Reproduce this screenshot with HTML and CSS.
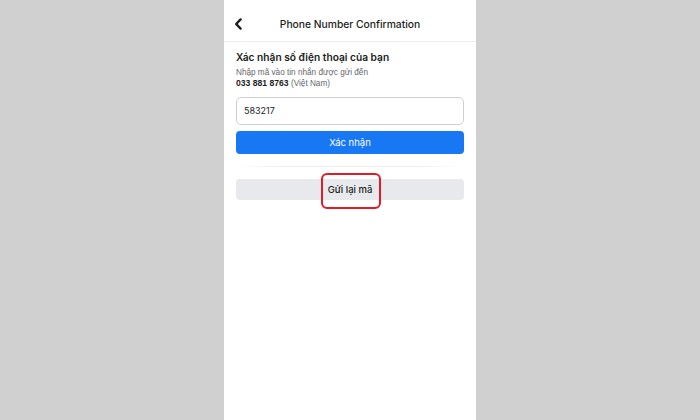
FILE: index.html
```html
<!DOCTYPE html>
<html lang="vi">
<head>
<meta charset="utf-8">
<link rel="stylesheet" href="styles.css">
</head>
<body>
<div class="phone">
  <header class="bar">
    <svg class="back" width="9" height="12" viewBox="0 0 9 12"><path d="M6.6 1.4 L2.2 6 L6.6 10.6" fill="none" stroke="#1c1e21" stroke-width="2.4" stroke-linecap="round" stroke-linejoin="round"/></svg>
    <div class="title">Phone Number Confirmation</div>
  </header>
  <main class="content">
    <h1 class="heading">Xác nhận số điện thoại của bạn</h1>
    <p class="sub">Nhập mã vào tin nhắn được gửi đến</p>
    <p class="num"><b>033 881 8763</b> <span>(Việt Nam)</span></p>
    <div class="input">583217</div>
    <button class="primary">Xác nhận</button>
    <div class="sep"></div>
    <div class="resend-row">
      <button class="secondary">Gửi lại mã</button>
      <span class="mark"></span>
    </div>
  </main>
</div>
</body>
</html>
```
FILE: styles.css
```css
html, body { margin: 0; padding: 0; }
body {
  width: 700px; height: 420px;
  background: #d0d0d0;
  font-family: "Liberation Sans", Arial, sans-serif;
  color: #1c1e21;
  display: flex; justify-content: center;
  overflow: hidden;
}
.phone {
  width: 252px; height: 420px;
  background: #fff;
}
.bar {
  height: 42px;
  border-bottom: 1px solid #ececec;
  display: flex; align-items: center;
  position: relative;
  box-sizing: border-box;
  padding-top: 7px;
}
.back { position: absolute; left: 10px; top: 18px; }
.title {
  flex: 1; text-align: center;
  font-family: Inter, "Liberation Sans", sans-serif;
  font-size: 10.3px; font-weight: 500;
}
.content { padding: 7px 12px 0; }
.heading {
  margin: 0;
  font-family: Inter, "Liberation Sans", sans-serif;
  font-size: 10.2px; font-weight: 600; line-height: 16px;
}
.sub {
  margin: 3px 0 0; font-size: 8.2px; color: #65676b; line-height: 10px;
}
.num {
  margin: 0; font-size: 8.6px; line-height: 10px;
}
.num span { color: #65676b; font-size: 8.2px; }
.input {
  margin-top: 8px;
  height: 28px; box-sizing: border-box;
  border: 1px solid #ccd0d5; border-radius: 5px;
  font-family: Inter, "Liberation Sans", sans-serif;
  font-size: 9px; line-height: 26px; padding-left: 7px;
}
.primary {
  display: block; width: 100%;
  margin-top: 6px; height: 23px;
  border: 0; border-radius: 4px;
  background: #1877f2; color: #fff;
  font-family: Inter, "Liberation Sans", sans-serif;
  font-size: 9.5px; font-weight: 400;
}
.sep {
  margin: 12px 0 0; height: 1px;
  background: linear-gradient(90deg, rgba(235,235,235,0), #ededed 20%, #ededed 80%, rgba(235,235,235,0));
}
.resend-row { position: relative; margin-top: 12px; }
.secondary {
  display: block; width: 100%;
  height: 21px;
  border: 0; border-radius: 4px;
  background: #e8e9ec; color: #1c1e21;
  font-family: Inter, "Liberation Sans", sans-serif;
  font-size: 9.5px; font-weight: 500;
}
.mark {
  position: absolute; left: 85px; top: -6px;
  width: 60px; height: 36px; box-sizing: border-box;
  border: 2px solid #e21b24; border-radius: 6px;
}
```
